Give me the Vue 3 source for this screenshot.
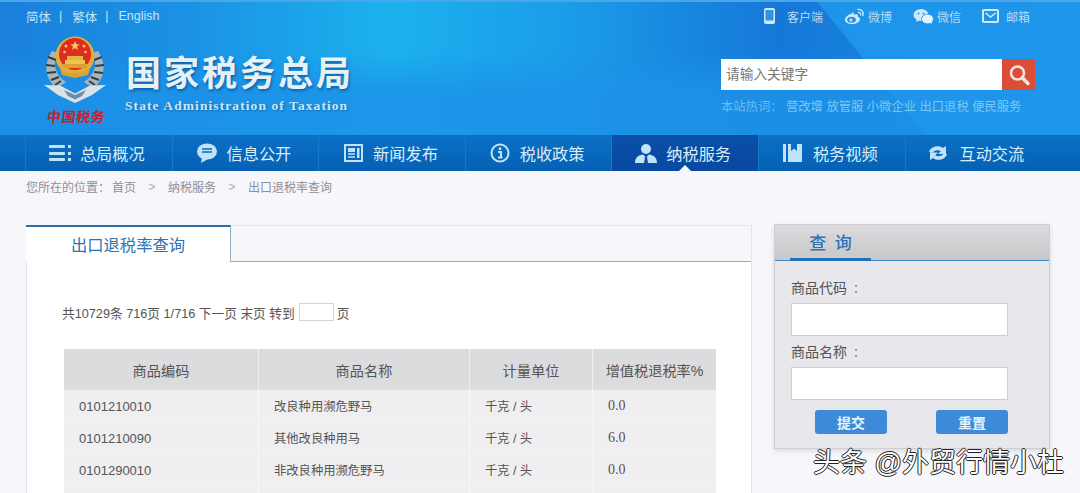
<template>
  <div class="page">
    <header class="head">
      <div class="head-left">
        <div class="lang">
          <span>简体</span><i>|</i><span>繁体</span><i>|</i><span>English</span>
        </div>
        <div class="brand">
          <div class="emblem">
            <svg width="70" height="72" viewBox="0 0 70 72">
              <path d="M10 16 C1 30 3 44 15 53 L24 47 C13 40 10 28 16 18 Z" fill="#a9b6b8" />
              <path d="M56 16 C65 30 63 44 51 53 L42 47 C53 40 56 28 50 18 Z" fill="#a9b6b8" />
              <path d="M6 22l8 3M4 30l9 1M5 38l9-1M9 45l8-3M13 50l6-4M60 22l-8 3M62 30l-9 1M61 38l-9-1M57 45l-8-3M53 50l-6-4" stroke="#2f3f4a" stroke-width="2" />
              <circle cx="33" cy="21" r="19.500" fill="#e0ae3a" />
              <circle cx="33" cy="19" r="16" fill="#dd2c22" />
              <path d="M23 25h20v4H23z" fill="#f0c24e" />
              <path d="M25 21h16v4H25z" fill="#e8b640" />
              <path d="M21 29h24v4H21z" fill="#d9a233" />
              <path d="M18 34c7 6 23 6 30 0l-2 6-13 3-13-3z" fill="#d9a233" />
              <path d="M33 6l1.300 3.300 3.500.1-2.800 2.200 1 3.400-3-2-3 2 1-3.400-2.800-2.200 3.500-.1z" fill="#f3cb52" />
              <circle cx="24" cy="11" r="1.500" fill="#f3cb52" /><circle cx="42" cy="11" r="1.500" fill="#f3cb52" />
              <circle cx="22.500" cy="17" r="1.300" fill="#f3cb52" /><circle cx="43.500" cy="17" r="1.300" fill="#f3cb52" />
              <path d="M2 50l16 .5 15 8 15-8 16-.5-14 10-17 8-17-8z" fill="#dce3e6" />
              <path d="M22 55l11 5 11-5-4 6-7 3.500-7-3.500z" fill="#6c8ea5" />
            </svg>
            <div class="seal">中国税务</div>
          </div>
          <div class="brand-text">
            <div class="brand-cn">国家税务总局</div>
            <div class="brand-en">State Administration of Taxation</div>
          </div>
        </div>
      </div>
      <div class="head-right">
        <div class="links">
          <div class="link" v-for="l in links" :key="l.text" :class="l.cls">
            <svg v-if="l.cls === 'phone'" width="13" height="18" viewBox="0 0 13 18"><rect x="1" y="1" width="11" height="16" rx="2" fill="#cfe9fb" /><rect x="2.500" y="3" width="8" height="10.500" fill="#2a93e2" /></svg>
            <svg v-if="l.cls === 'weibo'" width="21" height="17" viewBox="0 0 21 17"><path d="M8 5.500C4 6.500 1 9.500 1 12c0 2.500 3.500 4 7 4 4.500 0 8-2.200 8-4.800 0-1.700-1.600-2.100-2.200-2.400.6-1.700-.3-3-3-2.200-1 .3-1.300 0-1-1 .2-1-.5-1.300-1.800-.6z" fill="#cfe9fb" /><ellipse cx="7.500" cy="11.800" rx="4.400" ry="3" fill="#2a8fe0" /><circle cx="7" cy="12" r="1.500" fill="#cfe9fb" /><path d="M14 1.500c3-.5 6 2 5 6M14.500 4.500c1.500-.2 2.500 1 2.200 2.500" fill="none" stroke="#cfe9fb" stroke-width="1.300" stroke-linecap="round" /></svg>
            <svg v-if="l.cls === 'wechat'" width="21" height="17" viewBox="0 0 21 17"><ellipse cx="8" cy="7" rx="7.500" ry="6" fill="#cfe9fb" /><path d="M4 11l-1 3 4-2z" fill="#cfe9fb" /><ellipse cx="14.500" cy="11" rx="6" ry="4.800" fill="#e4f3fd" stroke="#2a93e2" stroke-width=".8" /><path d="M17 14.500l2 1.500-.5-3z" fill="#e4f3fd" /><circle cx="5.500" cy="5.500" r="1" fill="#2a93e2" /><circle cx="10.500" cy="5.500" r="1" fill="#2a93e2" /></svg>
            <svg v-if="l.cls === 'mail'" width="17" height="14" viewBox="0 0 17 14"><rect x="1" y="1" width="15" height="12" rx="1" fill="none" stroke="#cfe9fb" stroke-width="2" /><path d="M3.500 4l5 4 5-4" fill="none" stroke="#cfe9fb" stroke-width="1.600" /></svg>
            <span>{{ l.text }}</span>
          </div>
        </div>
        <div class="search">
          <div class="search-input">请输入关键字</div>
          <div class="search-btn">
            <svg width="24" height="24" viewBox="0 0 24 24"><circle cx="10.500" cy="10" r="6.500" fill="none" stroke="#f6e3dc" stroke-width="2.600" /><path d="M15.500 15l5.500 5.500" stroke="#f6e3dc" stroke-width="3.600" stroke-linecap="round" /></svg>
          </div>
        </div>
        <div class="hot">
          <span class="hot-label">本站热词：</span>
          <span v-for="h in hotWords" :key="h">{{ h }}</span>
        </div>
      </div>
    </header>

    <nav class="nav">
      <a v-for="n in navItems" :key="n.text" class="nav-item" :class="{ active: n.active }">
        <svg width="24" height="20" viewBox="0 0 24 20" v-html="n.icon"></svg>
        <span>{{ n.text }}</span>
      </a>
    </nav>

    <div class="crumb">
      <span class="crumb-label">您所在的位置：</span><span>首页</span><em>&gt;</em><span>纳税服务</span><em>&gt;</em><span>出口退税率查询</span>
    </div>

    <div class="main">
      <section class="card">
        <div class="tabs">
          <div class="tab">出口退税率查询</div>
        </div>
        <div class="card-body">
          <div class="pager">
            共10729条 716页 1/716 下一页 末页 转到<input class="pager-input" type="text" />页
          </div>
          <table class="rates">
            <thead>
              <tr><th v-for="h in headers" :key="h">{{ h }}</th></tr>
            </thead>
            <tbody>
              <tr v-for="r in rows" :key="r.code">
                <td class="code">{{ r.code }}</td>
                <td>{{ r.name }}</td>
                <td>{{ r.unit }}</td>
                <td class="rate">{{ r.rate }}</td>
              </tr>
              <tr class="blank"><td></td><td></td><td></td><td></td></tr>
            </tbody>
          </table>
        </div>
      </section>

      <aside class="side">
        <div class="side-head"><span>查 询</span></div>
        <div class="side-body">
          <label>商品代码 :</label>
          <input type="text" class="side-input" />
          <label>商品名称 :</label>
          <input type="text" class="side-input" />
          <div class="side-btns">
            <button>提交</button>
            <button>重置</button>
          </div>
        </div>
      </aside>
    </div>

    <div class="mark">头条 @外贸行情小杜</div>
  </div>
</template>

<script setup>
const links = [
  { text: '客户端', cls: 'phone' },
  { text: '微博', cls: 'weibo' },
  { text: '微信', cls: 'wechat' },
  { text: '邮箱', cls: 'mail' },
]

const hotWords = ['营改增', '放管服', '小微企业', '出口退税', '便民服务']

const c = '#bfe3f8'
const navItems = [
  { text: '总局概况', icon: `<rect x="1" y="2" width="16" height="3" rx="1" fill="${c}"/><rect x="1" y="9" width="16" height="3" rx="1" fill="${c}"/><rect x="1" y="15" width="16" height="3" rx="1" fill="${c}"/><rect x="20" y="2" width="3" height="3" fill="${c}"/><rect x="20" y="9" width="3" height="3" fill="${c}"/><rect x="20" y="15" width="3" height="3" fill="${c}"/>` },
  { text: '信息公开', icon: `<ellipse cx="12" cy="8.500" rx="10" ry="8" fill="${c}"/><path d="M7 14l-1 6 7-4z" fill="${c}"/><path d="M7 6h10M7 9h10" stroke="#0a69bd" stroke-width="1.500"/>` },
  { text: '新闻发布', icon: `<rect x="4" y="2" width="17" height="16" fill="none" stroke="${c}" stroke-width="2"/><rect x="7" y="5" width="7" height="4" fill="${c}"/><path d="M7 11h7M7 14h7" stroke="${c}" stroke-width="1.500"/><rect x="16" y="5" width="2.500" height="10" fill="${c}"/>` },
  { text: '税收政策', icon: `<circle cx="12" cy="10" r="8.500" fill="none" stroke="${c}" stroke-width="2"/><rect x="10.800" y="4.500" width="2.500" height="2.500" fill="${c}"/><path d="M10 9h3v5.500h1.500M10 14.500h4" fill="none" stroke="${c}" stroke-width="2"/>` },
  { text: '纳税服务', active: true, icon: `<circle cx="12" cy="6" r="5" fill="${c}"/><path d="M1 20c0-6 4-8 8-8.500l3 3 3-3c4 .5 8 2.500 8 8.500z" fill="${c}"/><path d="M11 14h2l1 6h-4z" fill="#0a4ea6"/>` },
  { text: '税务视频', icon: `<rect x="2" y="1" width="3" height="18" fill="${c}"/><path d="M7 1h3v7l3-2.500L16 8V1h5v18H7z" fill="${c}"/>` },
  { text: '互动交流', icon: `<path d="M2 9c1-5 9-8 14-4l3-2v8h-8l2.800-2.800C11 6.500 7 7.200 5.500 10z" fill="${c}"/><path d="M20 11c-1 5-9 8-14 4l-3 2V9.500h8L8.200 12.300c3 1.700 7 1 8.300-1.800z" fill="${c}"/>` },
]

const headers = ['商品编码', '商品名称', '计量单位', '增值税退税率%']

const rows = [
  { code: '0101210010', name: '改良种用濒危野马', unit: '千克 / 头', rate: '0.0' },
  { code: '0101210090', name: '其他改良种用马', unit: '千克 / 头', rate: '6.0' },
  { code: '0101290010', name: '非改良种用濒危野马', unit: '千克 / 头', rate: '0.0' },
]
</script>

<style>
html, body {
  margin: 0;
  height: 493px;
  overflow: hidden;
  background: #f6f6fb;
}
</style>

<style scoped>
.page {
  position: relative;
  width: 1080px;
  height: 493px;
  overflow: hidden;
  background: #f6f6fb;
  font-family: "Liberation Sans", "Noto Sans CJK SC", sans-serif;
  color: #555;
}

.head {
  height: 135px;
  box-sizing: border-box;
  display: flex;
  justify-content: space-between;
  padding: 0 45px 0 26px;
  border-top: 2px solid #4aa6ea;
  background:
    linear-gradient(51deg, rgba(30,150,235,0) 0 77.800%, rgba(30,150,235,0.95) 78% 100%),
    linear-gradient(180deg, rgba(28,146,232,0) 38%, rgba(28,146,232,0.85) 68%),
    linear-gradient(90deg, #1a80dc 0, #1b93e4 18%, #1cb1ee 36%, #1b9de8 52%, #1578d8 72%, #1b8ee4 100%);
}

.lang {
  display: flex;
  align-items: center;
  gap: 8px;
  height: 28px;
  font-size: 12.500px;
  color: #c4e4f8;
}
.lang i { font-style: normal; margin-right: 2px; }

.brand {
  display: flex;
  margin-top: 5px;
  margin-left: 16px;
}

.emblem { width: 70px; }
.emblem svg { display: block; }

.seal {
  margin: 0 0 0 5px;
  width: 62px;
  font-size: 14px;
  line-height: 20px;
  font-weight: 700;
  letter-spacing: 0.600px;
  white-space: nowrap;
  color: #c91f2c;
  transform: skewX(-8deg);
}

.brand-text { margin: 19px 0 0 14px; }

.brand-cn {
  font-size: 35px;
  line-height: 40px;
  font-weight: 700;
  letter-spacing: 3px;
  white-space: nowrap;
  color: #e6f1f6;
  text-shadow: 1px 2px 3px rgba(5, 60, 130, 0.6);
}

.brand-en {
  margin: 3px 0 0 -1px;
  font-family: "Liberation Serif", serif;
  font-size: 13.500px;
  line-height: 18px;
  font-weight: 700;
  letter-spacing: 1.080px;
  white-space: nowrap;
  color: #cfe5f3;
  text-shadow: 1px 1px 2px rgba(5, 60, 130, 0.5);
}

.head-right { width: 314px; }

.links {
  height: 28px;
  display: flex;
  align-items: center;
  margin-left: 42px;
  font-size: 12px;
  color: #b7dcf6;
}
.link { display: flex; align-items: center; }
.phone { gap: 11px; width: 81px; }
.weibo { gap: 3px; width: 69px; }
.wechat { gap: 3px; width: 69px; }
.mail { gap: 7px; }

.search {
  display: flex;
  height: 31px;
  margin-top: 29px;
}

.search-input {
  flex: 1;
  background: #fff;
  color: #777;
  font-size: 13.700px;
  line-height: 31px;
  padding-left: 5px;
}

.search-btn {
  width: 33px;
  background: #dc4d38;
  display: flex;
  align-items: center;
  justify-content: center;
}

.hot {
  margin-top: 8px;
  display: flex;
  gap: 3.500px;
  font-size: 12.300px;
  line-height: 18px;
  color: #7cc9f3;
  white-space: nowrap;
}
.hot-label { color: #6abdee; }

.nav {
  height: 36px;
  display: flex;
  padding-left: 25px;
  background: linear-gradient(180deg, #0a70c6, #0661b4);
}

.nav-item {
  width: 146.600px;
  flex: none;
  box-sizing: border-box;
  border-left: 1px solid #1a78c8;
  padding-right: 5px;
  position: relative;
  display: flex;
  align-items: center;
  justify-content: center;
  gap: 8px;
  font-size: 16.200px;
  color: #d7eefa;
}

.nav-item.active {
  background: linear-gradient(180deg, #0a50a8, #0848a0);
}
.nav-item.active::after {
  content: "";
  position: absolute;
  left: 50%;
  bottom: 0;
  margin-left: -6px;
  border: 6px solid transparent;
  border-top: 0;
  border-bottom-color: #f6f6fb;
}

.crumb {
  height: 31px;
  display: flex;
  align-items: center;
  padding-left: 26px;
  font-size: 12px;
  color: #8f8f96;
}
.crumb-label { margin-right: 2px; }
.crumb em {
  font-style: normal;
  width: 32px;
  text-align: center;
  color: #aaa;
}

.main {
  display: flex;
  align-items: flex-start;
  gap: 22px;
  padding: 23px 0 0 26px;
}

.card {
  width: 726px;
  flex: none;
  box-sizing: border-box;
  background: #fff;
  border: 1px solid #e3e3ea;
  border-top: 0;
}

.tabs {
  height: 37px;
  box-sizing: border-box;
  background: #f7f6fb;
  border-top: 1px solid #e6e6ec;
  border-bottom: 1px solid #8db6c4;
}

.tab {
  width: 205px;
  height: 37px;
  box-sizing: border-box;
  margin: -1px 0 0 -1px;
  background: #fff;
  border-top: 2px solid #2e6fa6;
  border-right: 1px solid #8db6c4;
  padding-left: 45px;
  font-size: 16.300px;
  line-height: 36px;
  color: #2c74b0;
}

.card-body { padding: 39px 35px 40px 37px; }

.pager {
  height: 22px;
  margin-left: -2px;
  display: flex;
  align-items: center;
  font-size: 12.700px;
  color: #555;
  white-space: nowrap;
}

.pager-input {
  width: 35px;
  height: 18px;
  box-sizing: border-box;
  margin: 0 3px 0 4px;
  padding: 0;
  border: 1px solid #d5d5da;
  background: #fff;
}

.rates {
  margin-top: 26px;
  width: 652px;
  table-layout: fixed;
  border-collapse: collapse;
}

.rates th:nth-child(1) { width: 194px; }
.rates th:nth-child(2) { width: 210px; }
.rates th:nth-child(3) { width: 122px; }

.rates th {
  height: 41px;
  padding: 0;
  background: #dcdbde;
  border-right: 1px solid #f0f0f2;
  font-size: 14.200px;
  font-weight: 400;
  color: #555;
  white-space: nowrap;
}

.rates td {
  height: 30px;
  padding: 1px 0 0 15px;
  background: #efeef1;
  border-right: 1px solid #f6f6f8;
  border-bottom: 1px solid #f4f4f6;
  font-size: 12.300px;
  color: #555;
  white-space: nowrap;
}

.rates th:last-child, .rates td:last-child { border-right: 0; }
.rates td.code { font-size: 13px; }
.rates td.rate { font-family: "Liberation Serif", serif; font-size: 14px; }

.side {
  width: 276px;
  height: 225px;
  flex: none;
  margin-top: -1px;
  box-sizing: border-box;
  background: #e7e7ec;
  border: 1px solid #cfcfd3;
  box-shadow: 0 2px 5px rgba(0, 0, 0, 0.12);
}

.side-head {
  height: 36px;
  box-sizing: border-box;
  padding-left: 15px;
  background: linear-gradient(180deg, #dcdcde, #d0d0d3 55%, #c8c8cb);
  border-bottom: 1px solid #3d8ac8;
}

.side-head span {
  display: block;
  width: 81px;
  height: 36px;
  box-sizing: border-box;
  border-bottom: 3px solid #1f72b8;
  text-align: center;
  font-size: 17px;
  word-spacing: 4px;
  line-height: 38px;
  font-weight: 500;
  color: #2c74b8;
}

.side-body {
  padding: 17px 0 0 16px;
  display: flex;
  flex-direction: column;
  align-items: flex-start;
}

.side-body label {
  font-size: 14px;
  line-height: 20px;
  word-spacing: 3px;
  color: #555;
}

.side-input {
  width: 217px;
  height: 33px;
  box-sizing: border-box;
  margin: 5px 0 6px;
  padding: 0;
  border: 1px solid #cfcfd2;
  background: #fff;
}

.side-btns {
  display: flex;
  gap: 49px;
  margin: 4px 0 0 24px;
}

.side-btns button {
  width: 72px;
  height: 24px;
  padding: 0;
  border: 0;
  border-radius: 3px;
  background: #3d8bd8;
  font-family: inherit;
  font-size: 14px;
  font-weight: 700;
  color: #e8f3fb;
}

.mark {
  position: absolute;
  left: 813px;
  top: 446px;
  font-size: 27px;
  line-height: 34px;
  color: #fff;
  white-space: nowrap;
  text-shadow: -1px 0 0 #222, 0 1px 0 #222, 1px 0 0 #222, 0 -1px 0 #222;
}
</style>
